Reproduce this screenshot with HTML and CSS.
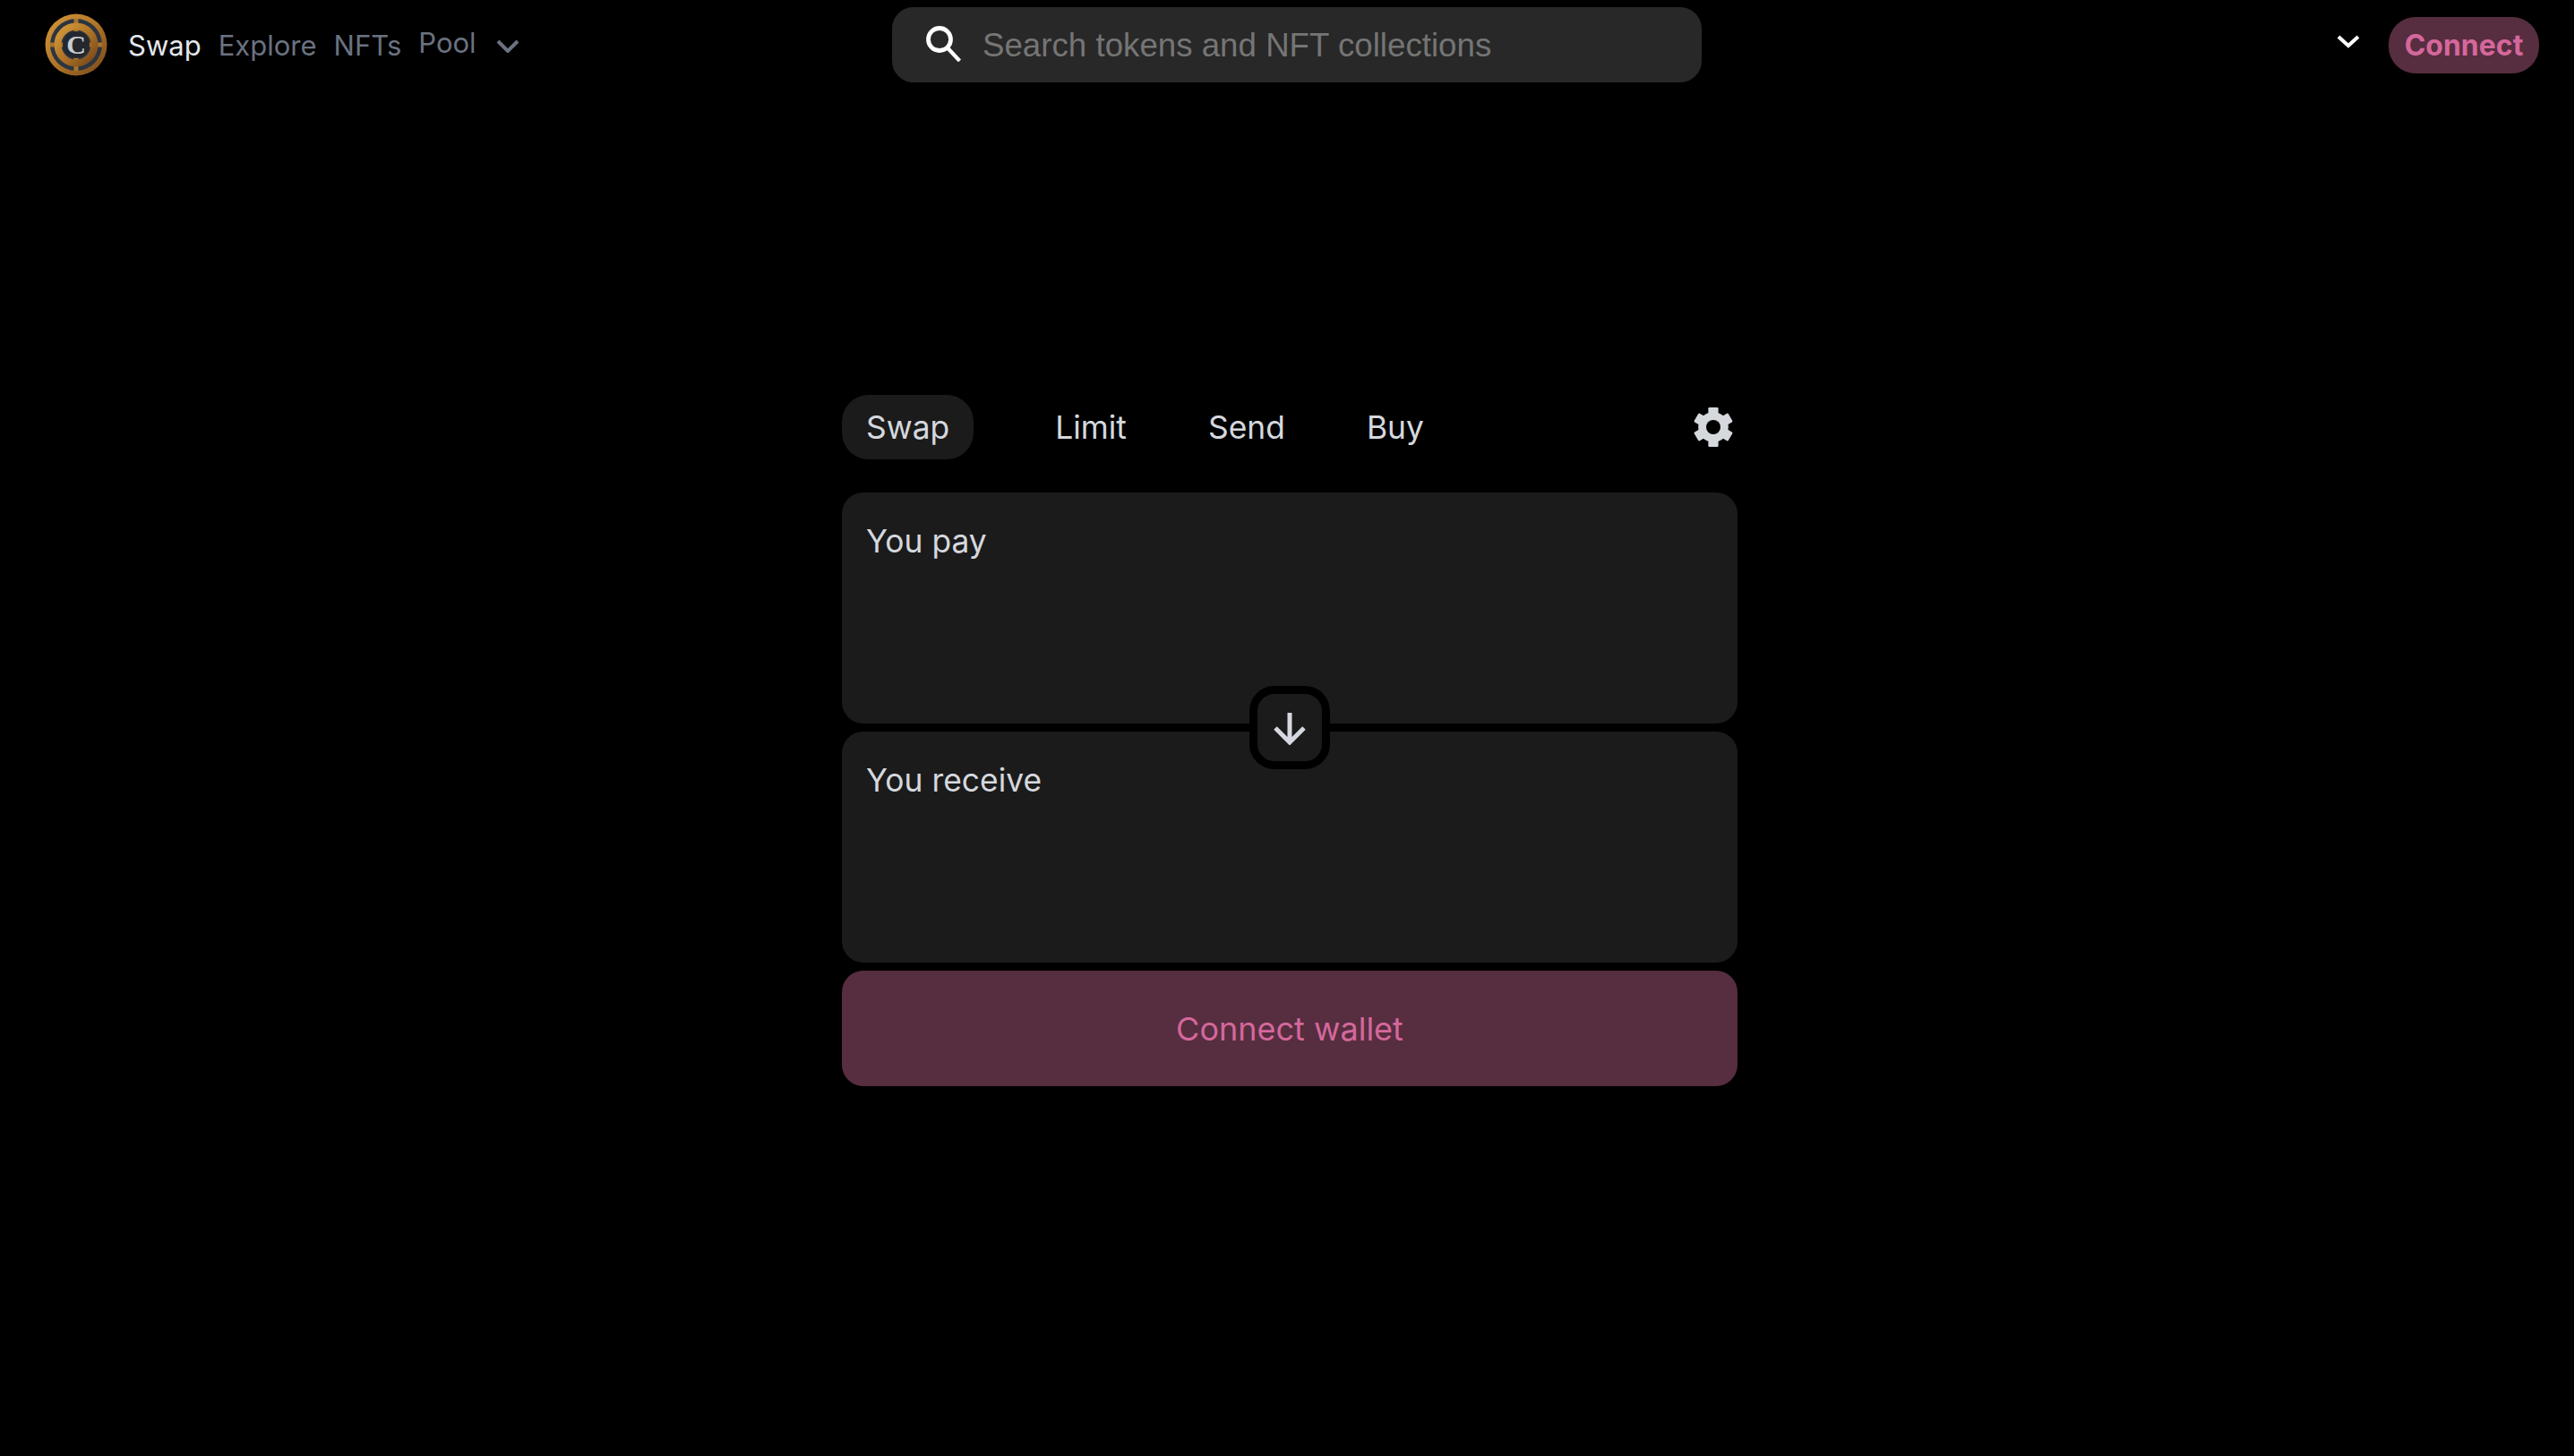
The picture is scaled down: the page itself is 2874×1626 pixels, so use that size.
FILE: index.html
```html
<!DOCTYPE html>
<html lang="en">
<head>
  <meta charset="UTF-8">
  <title>Swap</title>
  <link rel="stylesheet" href="styles.css">
</head>
<body>

  <header class="topbar">
    <div class="nav-left">
      <svg class="logo" viewBox="0 0 70 70">
        <defs>
          <linearGradient id="gold" x1="0" y1="0" x2="1" y2="1">
            <stop offset="0" stop-color="#d69a3c"/>
            <stop offset="0.55" stop-color="#ab7024"/>
            <stop offset="1" stop-color="#74461b"/>
          </linearGradient>
        </defs>
        <circle cx="35" cy="35" r="34.5" fill="url(#gold)"/>
        <circle cx="35" cy="35" r="29" fill="#2c3540"/>
        <path d="M35 6v58M6 35h58" stroke="#a9742b" stroke-width="5"/>
        <circle cx="35" cy="35" r="20.500" fill="none" stroke="url(#gold)" stroke-width="8"/>
        <circle cx="35" cy="35" r="15" fill="#24272d"/>
        <text class="logo-mark" x="35" y="45" text-anchor="middle">C</text>
      </svg>
      <a class="nav-link active">Swap</a>
      <a class="nav-link">Explore</a>
      <a class="nav-link">NFTs</a>
      <a class="nav-link pool">Pool</a>
      <svg class="nav-chevron" viewBox="0 0 26 15"><path d="M2 2l11 11L24 2" fill="none" stroke="#6b7280" stroke-width="4"/></svg>
    </div>

    <div class="search">
      <svg class="search-icon" viewBox="0 0 40 40"><circle cx="15" cy="15" r="12.500" fill="none" stroke="#fff" stroke-width="4.800"/><path d="M23.500 24l14 15" stroke="#fff" stroke-width="4.200"/></svg>
      <span class="search-text">Search tokens and NFT collections</span>
    </div>

    <div class="nav-right">
      <svg class="white-chevron" viewBox="0 0 26 15"><path d="M2 2l11 10L24 2" fill="none" stroke="#fff" stroke-width="4"/></svg>
      <button class="connect">Connect</button>
    </div>
  </header>

  <main class="widget">
    <div class="tabs">
      <a class="tab selected">Swap</a>
      <a class="tab">Limit</a>
      <a class="tab">Send</a>
      <a class="tab">Buy</a>
      <svg class="gear" viewBox="0 0 24 24">
        <rect x="9.200" y="1" width="5.600" height="22" rx="0.600"/>
        <rect x="9.200" y="1" width="5.600" height="22" rx="0.600" transform="rotate(60 12 12)"/>
        <rect x="9.200" y="1" width="5.600" height="22" rx="0.600" transform="rotate(120 12 12)"/>
        <circle cx="12" cy="12" r="8.400"/>
        <circle class="gear-hole" cx="12" cy="12" r="4"/>
      </svg>
    </div>

    <div class="panels">
      <section class="panel">You pay</section>
      <section class="panel">You receive</section>
      <div class="flip">
        <svg viewBox="0 0 36 36"><path d="M18 0v33M2 17l16 16 16-16" fill="none" stroke="#d5d8e0" stroke-width="5"/></svg>
      </div>
    </div>

    <button class="connect-wallet">Connect wallet</button>
  </main>

</body>
</html>
```

FILE: styles.css
```css
* {
  box-sizing: border-box;
}
html, body {
  margin: 0;
  height: 100%;
}
body {
  background-color: #000;
  font-family: Inter, "Liberation Sans", sans-serif;
  color: #d5d8de;
}
button {
  border: none;
  font-family: inherit;
}

.topbar {
  display: grid;
  grid-template-columns: 996px 904px 1fr;
  height: 100px;
  padding-top: 8px;
  align-items: start;
}
.nav-left {
  display: flex;
  align-items: center;
  height: 84px;
  padding-left: 50px;
}
.logo {
  width: 70px;
  height: 70px;
  margin-right: 23px;
}
.logo-mark {
  font-family: "Liberation Serif", serif;
  font-weight: bold;
  font-size: 30px;
  fill: #c9ccd2;
}
.nav-link {
  font-size: 31px;
  color: #6b7280;
  margin-right: 19px;
}
.nav-link.active {
  color: #e5e7eb;
}
.nav-link.pool {
  margin-top: -5px;
  margin-right: 22px;
}
.nav-chevron {
  width: 26px;
  height: 15px;
  margin-top: 2px;
}

.search {
  display: flex;
  align-items: center;
  gap: 23px;
  height: 84px;
  padding-left: 38px;
  background-color: #282828;
  border-radius: 24px;
  font-family: "Liberation Sans", Arial, sans-serif;
  font-size: 36.7px;
  color: #757575;
}
.search-icon {
  width: 40px;
  height: 40px;
  margin-top: -2px;
}
.search-text {
  margin-top: 2px;
}

.nav-right {
  display: flex;
  justify-content: flex-end;
  align-items: flex-start;
  padding-right: 39px;
  padding-top: 11px;
}
.white-chevron {
  width: 26px;
  height: 15px;
  margin: 20px 32px 0 0;
}
.connect {
  width: 168px;
  height: 63px;
  padding: 0;
  border-radius: 30px;
  background-color: #572d40;
  color: #d4689b;
  font-size: 32px;
  font-weight: 700;
}

.widget {
  width: 1000px;
  margin: 341px 0 0 940px;
}
.tabs {
  display: flex;
  align-items: center;
  height: 72px;
  margin-bottom: 37px;
}
.tab {
  padding: 1px 28px 0;
  margin-right: 35px;
  line-height: 71px;
  font-size: 35.4px;
  border-radius: 30px;
}
.tab.selected {
  padding: 1px 27px 0;
  background-color: #1b1b1b;
  margin-right: 63px;
}
.gear {
  width: 48px;
  height: 48px;
  margin-left: auto;
  margin-right: 3px;
  fill: #d5d8dc;
}
.gear-hole {
  fill: #000;
}

.panels {
  position: relative;
  display: flex;
  flex-direction: column;
  gap: 9px;
}
.panel {
  height: 258px;
  padding: 33px 27px;
  background-color: #1b1b1b;
  border-radius: 24px;
  font-size: 35.4px;
  line-height: 44px;
}
.flip {
  position: absolute;
  left: 455px;
  top: 216px;
  display: flex;
  align-items: center;
  justify-content: center;
  width: 90px;
  height: 93px;
  background-color: #1b1b1b;
  border: 9px solid #000;
  border-radius: 28px;
}
.flip svg {
  width: 36px;
  height: 36px;
  margin-top: 2px;
}

.connect-wallet {
  display: block;
  width: 100%;
  height: 129px;
  margin-top: 9px;
  padding: 0;
  background-color: #572d40;
  border-radius: 24px;
  color: #d4689b;
  font-size: 36px;
}
```
